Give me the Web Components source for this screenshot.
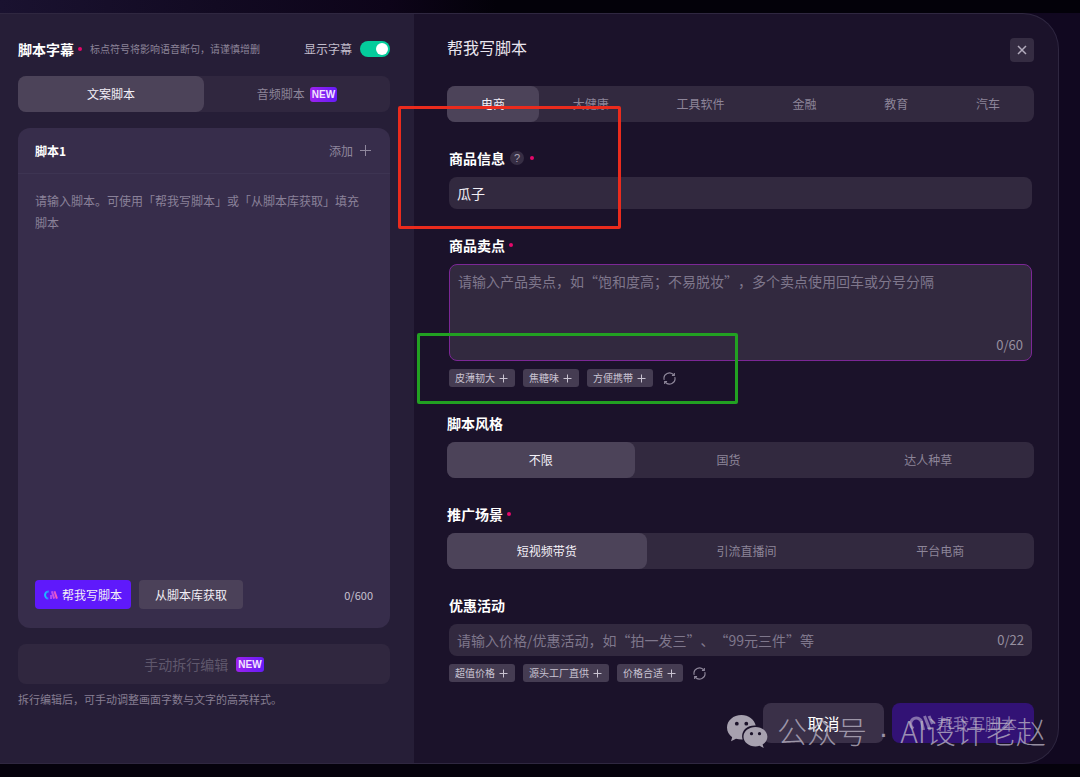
<!DOCTYPE html>
<html lang="zh-CN">
<head>
<meta charset="utf-8">
<meta name="viewport" content="width=device-width, initial-scale=1">
<title>帮我写脚本</title>
<style>
  html, body { margin: 0; min-height: 100vh; }
  body {
    font-family: "Noto Sans CJK SC", "Liberation Sans", sans-serif;
    text-spacing-trim: space-all;
    background: #05020c;
    color: #fff;
  }
</style>
</head>
<body>
<script-studio></script-studio>

<script>
const define = (name, html, setup) => {
  const tpl = document.createElement('template');
  tpl.innerHTML = '<style>*{box-sizing:border-box}button,input,textarea{font:inherit;color:inherit;margin:0;text-spacing-trim:inherit}svg{display:block;flex:none}</style>' + html;
  customElements.define(name, class extends HTMLElement {
    constructor() {
      super();
      this.attachShadow({ mode: 'open' }).append(tpl.content.cloneNode(true));
    }
    connectedCallback() { if (setup) setup(this, this.shadowRoot); }
  });
};

/* "NEW" marker */
define('new-badge', `
<style>
  :host { display: inline-block; height: 15px; padding: 0 2px; border-radius: 3px;
    background: linear-gradient(90deg, #9d22ee, #651cf8);
    font: bold 10px/15px "Liberation Sans", sans-serif; color: #f3e4ff; }
</style>NEW`);

/* Required marker */
define('required-dot', `
<style>:host { display: inline-block; width: 4px; height: 4px; border-radius: 50%; background: #e5086b; }</style>`);

/* Toggle */
define('toggle-switch', `
<style>
  :host { display: block; }
  label { display: flex; align-items: center; gap: 8px; font-size: 12px; line-height: 22px; color: #c3bdcc; }
  input { appearance: none; width: 30px; height: 16px; border-radius: 8px; background: #555; display: flex; padding: 2px; }
  input::before { content: ""; width: 12px; height: 12px; border-radius: 50%; background: #fff; }
  input:checked { background: #04cc9c; justify-content: flex-end; }
</style>
<label><slot></slot><input type="checkbox" checked></label>`);

/* Segmented tabs; items are separated by commas, "*" marks a new one */
define('segment-tabs', `
<style>
  :host { display: flex; height: 36px; border-radius: 8px; background: var(--track, #32293f); }
  button { flex: 1 1 auto; display: flex; align-items: center; justify-content: center; gap: 5px; padding: 0;
    border: 0; border-radius: 8px; background: none; font-size: 12px; line-height: 20px; color: #8d8599; white-space: nowrap; }
  :host([even]) button { flex: 1 1 0; }
  button[aria-pressed=true] { background: #4c4359; color: #f4f1f8; }
</style>`, (host, root) => {
  host.getAttribute('items').split(',').forEach((item, i) => {
    const b = document.createElement('button');
    b.type = 'button';
    b.textContent = item.replace('*', '');
    b.setAttribute('aria-pressed', String(i === 0));
    if (item.endsWith('*')) b.append(document.createElement('new-badge'));
    b.addEventListener('click', () => {
      root.querySelectorAll('button').forEach(x => x.setAttribute('aria-pressed', String(x === b)));
    });
    root.append(b);
  });
});

/* Suggestion tags followed by a refresh button */
define('tag-list', `
<style>
  :host { display: flex; align-items: center; gap: 8px; margin-top: 8px; }
  button { display: flex; align-items: center; gap: 4px; height: 18px; border: 0; border-radius: 3px; padding: 0 7px 0 6px;
    background: #453c52; color: #c9c3d1; font-size: 10px; line-height: 18px; white-space: nowrap; }
  .refresh { background: none; padding: 0 2px; color: #8f879b; }
</style>`, (host, root) => {
  host.getAttribute('items').split(',').forEach(item => {
    const b = document.createElement('button');
    b.type = 'button';
    b.innerHTML = '<span></span><svg width="9" height="9" viewBox="0 0 9 9" fill="none" stroke="currentColor"><path d="M4.5 .5v8M.5 4.5h8"/></svg>';
    b.firstChild.textContent = item;
    root.append(b);
  });
  const r = document.createElement('button');
  r.type = 'button';
  r.className = 'refresh';
  r.setAttribute('aria-label', '换一批');
  r.innerHTML = '<svg width="13" height="13" viewBox="0 0 14 14" fill="none" stroke="currentColor" stroke-width="1.2"><path d="M1.300 8.500A5.900 5.900 0 0 1 11.700 3.400M12.700 5.500A5.900 5.900 0 0 1 2.300 10.600"/><path d="M12.200 1v2.800H9.600M1.800 13v-2.800h2.600"/></svg>';
  root.append(r);
});

/* Section of the form: heading and slotted content */
define('form-section', `
<style>
  :host { display: block; }
  :host([inset]) { padding: 0 2px; }
  .head { display: flex; align-items: center; height: 22px; margin-bottom: 8px; gap: 4px; }
  h3 { margin: 0; font-size: 14px; line-height: 20px; font-weight: 700; }
  .help { width: 14px; height: 14px; padding: 0; border: 0; border-radius: 50%; background: #372e44; color: #aaa3b4;
    font: 11px/14px "Liberation Sans", sans-serif; margin: 0 2px 0 1px; }
</style>
<div class="head"><h3></h3></div>
<slot></slot>`, (host, root) => {
  const head = root.querySelector('.head');
  root.querySelector('h3').textContent = host.getAttribute('heading');
  if (host.hasAttribute('help')) head.insertAdjacentHTML('beforeend', '<button type="button" class="help">?</button>');
  if (host.hasAttribute('required')) head.append(document.createElement('required-dot'));
});

/* Single-line or multi-line text box with an optional counter */
define('text-field', `
<style>
  :host { display: block; }
  .box { display: flex; align-items: center; height: 32px; padding: 0 8px; border-radius: 8px; background: #32293f; }
  .box.multi { height: 97px; padding: 5px 8px 4px; border: 1px solid #7c2796; align-items: stretch; flex-direction: column; }
  input, textarea { flex: 1; min-width: 0; min-height: 0; display: block; border: 0; outline: 0; padding: 0; background: none; resize: none;
    font-size: 14px; line-height: 22px; color: #f1eef5; }
  ::placeholder { color: #7f778c; opacity: 1; }
  .count { font-size: 13px; line-height: 22px; color: #968f9f; text-align: right; }
</style>
<div class="box"></div>`, (host, root) => {
  const box = root.querySelector('.box');
  const multi = host.hasAttribute('multiline');
  box.classList.toggle('multi', multi);
  const field = document.createElement(multi ? 'textarea' : 'input');
  field.placeholder = host.getAttribute('placeholder') || '';
  field.value = host.getAttribute('value') || '';
  field.setAttribute('aria-label', host.getAttribute('label'));
  box.append(field);
  const max = host.getAttribute('max');
  if (max) {
    const c = document.createElement('span');
    c.className = 'count';
    c.textContent = '0/' + max;
    field.addEventListener('input', () => { c.textContent = field.value.length + '/' + max; });
    box.append(c);
  }
});

/* Left side: the script editor */
define('script-panel', `
<style>
  :host { display: flex; flex-direction: column; padding: 24px 24px 24px 18px; background: #261e37; }
  header { display: flex; align-items: center; height: 22px; margin-bottom: 16px; }
  h2 { margin: 0 4px 0 0; font-size: 14px; line-height: 22px; }
  .hint { margin-left: 8px; font-size: 10px; line-height: 22px; color: #8b8397; white-space: nowrap; }
  toggle-switch { margin-left: auto; }
  segment-tabs { --track: #30273f; }
  .card { display: flex; flex-direction: column; height: 500px; margin: 16px 0; border-radius: 12px; background: #372d4b; }
  .top { display: flex; align-items: center; justify-content: space-between; height: 46px; padding: 0 19px 0 17px; border-bottom: 1px solid #3d3452; }
  h3 { margin: 0; font-size: 12px; }
  .add { display: flex; align-items: center; gap: 7px; border: 0; padding: 0; background: none; font-size: 12px; color: #8f879d; }
  textarea { flex: 1; border: 0; outline: 0; resize: none; background: none; padding: 16px 24px 16px 17px; font-size: 12px; line-height: 22px; }
  textarea::placeholder { color: #8a8199; opacity: 1; }
  .bottom { display: flex; align-items: center; gap: 8px; padding: 0 17px 19px; }
  .bottom button { display: flex; align-items: center; justify-content: center; gap: 4px; height: 29px; border: 0; border-radius: 4px;
    font-size: 12px; padding: 0 16px; background: #4b4159; color: #f2eff6; white-space: nowrap; }
  .bottom .primary { background: #5f19fb; padding: 0 9px 0 8px; }
  .count { margin-left: auto; font-size: 11px; color: #c8c2d0; }
  .split { display: flex; align-items: center; justify-content: center; gap: 8px; height: 40px; border: 0; border-radius: 8px;
    background: #30273f; font-size: 14px; color: #5f576c; }
  p { margin: 5px 0 0; font-size: 11px; line-height: 20px; color: #877f93; }
</style>
<header>
  <h2>脚本字幕</h2><required-dot></required-dot>
  <span class="hint">标点符号将影响语音断句，请谨慎增删</span>
  <toggle-switch>显示字幕</toggle-switch>
</header>
<segment-tabs even items="文案脚本,音频脚本*"></segment-tabs>
<section class="card">
  <div class="top">
    <h3>脚本1</h3>
    <button type="button" class="add">添加
      <svg width="11" height="11" viewBox="0 0 11 11" fill="none" stroke="currentColor"><path d="M5.5 0v11M0 5.5h11"/></svg>
    </button>
  </div>
  <textarea aria-label="脚本1" placeholder="请输入脚本。可使用「帮我写脚本」或「从脚本库获取」填充脚本"></textarea>
  <div class="bottom">
    <button type="button" class="primary">
      <svg width="15" height="10" viewBox="0 0 15 10" fill="none" stroke-width="2">
        <defs><linearGradient id="c" x1="0" x2="1"><stop stop-color="#18c3ff"/><stop offset="1" stop-color="#3e6bff"/></linearGradient>
        <linearGradient id="m" x1="0" x2="1"><stop stop-color="#a648ff"/><stop offset="1" stop-color="#ff5bb4"/></linearGradient></defs>
        <path stroke="url(#c)" d="M6 1.4A3.6 3.6 0 1 0 5.4 8.6"/>
        <path stroke="url(#m)" d="M8 9V5M8.800 1.200l2.300 7.400M11.400 1.200l2.500 7.400"/>
      </svg>帮我写脚本</button>
    <button type="button">从脚本库获取</button>
    <span class="count">0/600</span>
  </div>
</section>
<button type="button" class="split">手动拆行编辑<new-badge></new-badge></button>
<p>拆行编辑后，可手动调整画面字数与文字的高亮样式。</p>`);

/* Right side: the script assistant form */
define('assistant-panel', `
<style>
  :host { display: flex; flex-direction: column; gap: 25px; padding: 24px 24px 19px 33px; }
  header { display: flex; align-items: flex-start; justify-content: space-between; height: 24px; margin-bottom: -1px; }
  h2 { margin: 0; font-size: 16px; line-height: 18px; font-weight: 400; color: #e9e5ef; }
  .close { width: 24px; height: 24px; border: 0; border-radius: 4px; padding: 0; background: #352c42; color: #b2abbc;
    display: flex; align-items: center; justify-content: center; }
  footer { display: flex; justify-content: flex-end; gap: 8px; margin-top: -4px; }
  footer button { display: flex; align-items: center; justify-content: center; gap: 3px; width: 121px; height: 40px; border: 0; border-radius: 8px;
    background: #3a3048; color: #fff; font-size: 16px; padding: 0; white-space: nowrap; }
  footer .go { width: 142px; background: #321275; color: #8570ac; }
</style>
<header>
  <h2>帮我写脚本</h2>
  <button type="button" class="close" aria-label="关闭">
    <svg width="10" height="10" viewBox="0 0 10 10" stroke="currentColor" stroke-width="1.5"><path d="M1 1l8 8M9 1l-8 8"/></svg>
  </button>
</header>
<segment-tabs items="电商,大健康,工具软件,金融,教育,汽车"></segment-tabs>
<form-section inset heading="商品信息" help required>
  <text-field label="商品信息" value="瓜子"></text-field>
</form-section>
<form-section inset heading="商品卖点" required>
  <text-field multiline label="商品卖点" max="60" placeholder="请输入产品卖点，如“饱和度高；不易脱妆”，多个卖点使用回车或分号分隔"></text-field>
  <tag-list items="皮薄韧大,焦糖味,方便携带"></tag-list>
</form-section>
<form-section heading="脚本风格">
  <segment-tabs items="不限,国货,达人种草"></segment-tabs>
</form-section>
<form-section heading="推广场景" required>
  <segment-tabs items="短视频带货,引流直播间,平台电商"></segment-tabs>
</form-section>
<form-section inset heading="优惠活动">
  <text-field label="优惠活动" max="22" placeholder="请输入价格/优惠活动，如“拍一发三”、“99元三件”等"></text-field>
  <tag-list items="超值价格,源头工厂直供,价格合适"></tag-list>
</form-section>
<footer>
  <button type="button">取消</button>
  <button type="button" class="go">
    <svg width="25" height="16" viewBox="0 0 25 16" fill="none" stroke="currentColor" stroke-width="3">
      <path d="M4.500 13.500A5.600 5.600 0 1 1 12.600 7l2 8M15.500 1l5.500 14M20 1l3.500 8"/></svg>帮我写脚本</button>
</footer>`);

/* Account watermark */
define('account-mark', `
<style>
  :host { display: flex; align-items: center; gap: 9px; font-size: 30px; line-height: 40px; font-weight: 300; color: rgba(190, 184, 200, .75); white-space: nowrap; }
  .dot { font-family: "Liberation Sans", sans-serif; padding: 0 5px; }
</style>
<svg width="41" height="34" viewBox="0 0 41 34">
  <path fill="#a7a1af" d="M14.5 0C6.300 0 0 5.500 0 12.500c0 4 2 7.400 5.200 9.700L4 26.300l5-2.500c1.700.5 3.500.8 5.500.8h1.200c-.4-1.100-.6-2.200-.6-3.400 0-6 5.300-10.600 12.300-10.600h1.300C27.300 4.300 21.500 0 14.500 0z"/>
  <path fill="#a7a1af" d="M28.500 12C21.800 12 16.500 16.300 16.500 21.700s5.300 9.700 12 9.700c1.400 0 2.800-.2 4-.6l4.200 2.300-1.100-3.600c2.900-1.800 4.800-4.600 4.800-7.800C40.400 16.300 35.200 12 28.500 12z"/>
  <g fill="#1b122a"><circle cx="9.800" cy="8.700" r="1.900"/><circle cx="19.300" cy="8.700" r="1.900"/><circle cx="24.500" cy="18.700" r="1.600"/><circle cx="32.500" cy="18.700" r="1.600"/></g>
</svg>
<span>公众号 <span class="dot">·</span> AI设计老赵</span>`);

define('script-studio', `
<style>
  :host { display: block; box-sizing: border-box; position: relative; min-height: 100vh; padding: 13px 0;
    background: linear-gradient(90deg, #1a1230 0, #120a22 20%, #0d0419 36%, #030109 46%, #030109 100%) 0 0 / 100% 13px no-repeat, #05020c; }
  .backdrop { background: #110820; padding-right: 21px; }
  .dialog { position: relative; display: grid; grid-template-columns: 414px minmax(0, 1fr); min-height: calc(100vh - 26px);
    border: 1px solid #2f2740; border-left: 0; border-radius: 0 36px 36px 0; background: #1b122a; overflow: hidden; }
  .mark { position: absolute; border-radius: 2px; pointer-events: none; }
  .red { left: 398px; top: 106px; width: 223px; height: 123px; border: 3px solid #ea2b1d; }
  .green { left: 417px; top: 333px; width: 321px; height: 71px; border: 3px solid #22a122; }
  account-mark { position: absolute; right: 34px; bottom: 24px; pointer-events: none; }
</style>
<div class="backdrop"><main class="dialog">
  <script-panel></script-panel>
  <assistant-panel></assistant-panel>
</main></div>
<div class="mark red"></div>
<div class="mark green"></div>
<account-mark></account-mark>`);
</script>
</body>
</html>
